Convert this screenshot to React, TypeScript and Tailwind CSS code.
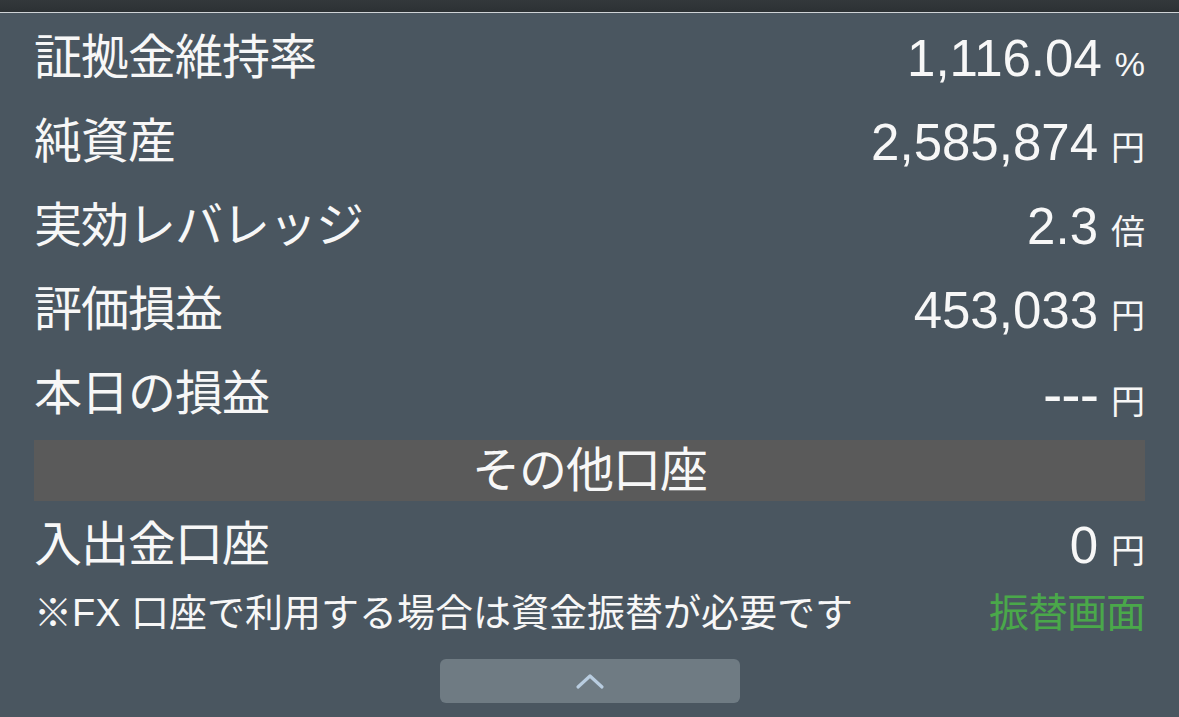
import React from "react"

type Row = {
  label: string
  value: string
  unit: string
}

const rows: Row[] = [
  { label: "証拠金維持率", value: "1,116.04", unit: "%" },
  { label: "純資産", value: "2,585,874", unit: "円" },
  { label: "実効レバレッジ", value: "2.3", unit: "倍" },
  { label: "評価損益", value: "453,033", unit: "円" },
  { label: "本日の損益", value: "---", unit: "円" },
]

const font = "font-['Liberation_Sans','Noto_Sans_CJK_JP',sans-serif]"

const ValueRow = ({ label, value, unit }: Row) => (
  <div className="flex h-[84px] items-center justify-between">
    <span className="text-[48px] leading-none tracking-[-1px]">{label}</span>
    <span className="flex items-baseline">
      <span className={value === "---" ? "text-[58px] leading-none tracking-[-1px]" : "text-[51px] leading-none"}>
        {value}
      </span>
      <span className="ml-[13px] text-[34px] leading-none">{unit}</span>
    </span>
  </div>
)

export default function App() {
  return (
    <div className={`h-[717px] w-[1179px] overflow-hidden bg-[#4a5660] text-[#f7f7f7] ${font}`}>
      {/* top bar */}
      <div className="h-[12px] bg-gradient-to-b from-[#33383b] to-[#2c3134]" />
      <div className="h-[1px] bg-[#cfd3d6]" />

      <div className="px-[34px] pt-[3px]">
        {rows.map((r) => (
          <ValueRow key={r.label} {...r} />
        ))}

        {/* section header */}
        <div className="mt-[4px] flex h-[61px] items-center justify-center bg-[#5a5a5a]">
          <span className="text-[48px] leading-none tracking-[-1px]">その他口座</span>
        </div>

        <div className="mt-[2px]">
          <ValueRow label="入出金口座" value="0" unit="円" />
        </div>

        <div className="flex h-[52px] items-center justify-between">
          <span className="text-[38px] leading-none">※FX 口座で利用する場合は資金振替が必要です</span>
          <span className="text-[40px] leading-none tracking-[-1px] text-[#4aa84a]">振替画面</span>
        </div>

        {/* collapse button */}
        <div className="mt-[20px] flex justify-center">
          <button className="flex h-[44px] w-[300px] items-center justify-center rounded-[6px] bg-[#6f7b83]">
            <svg width="30" height="18" viewBox="0 0 30 18" fill="none">
              <path
                d="M3 15 L15 4 L27 15"
                stroke="#b9cde0"
                strokeWidth="3.2"
                strokeLinecap="round"
                strokeLinejoin="round"
              />
            </svg>
          </button>
        </div>
      </div>
    </div>
  )
}
